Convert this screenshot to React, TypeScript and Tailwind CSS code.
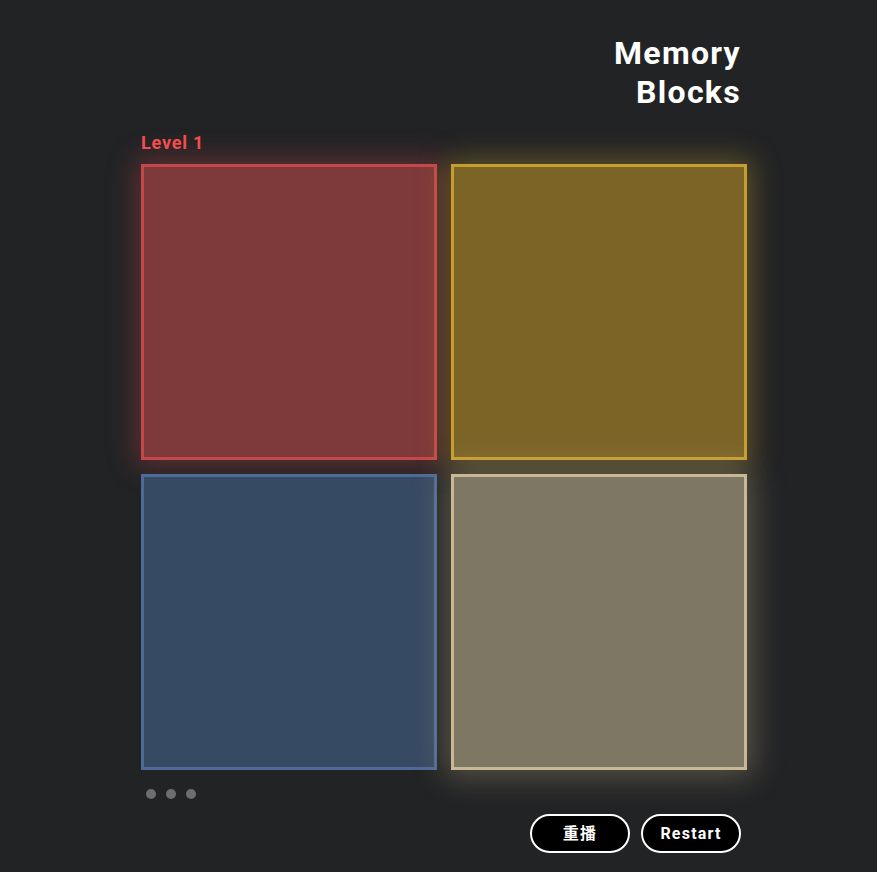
import React from "react";

const blocks = [
  { fill: "bg-[#7e393b]", border: "border-[#c4484a]", glow: "shadow-[0_0_26px_5px_rgba(200,70,72,0.38)]" },
  { fill: "bg-[#7c6427]", border: "border-[#c69e30]", glow: "shadow-[0_0_26px_5px_rgba(200,160,48,0.38)]" },
  { fill: "bg-[#374a63]", border: "border-[#4d6a98]", glow: "shadow-none" },
  { fill: "bg-[#7d7764]", border: "border-[#c8b894]", glow: "shadow-[0_0_30px_6px_rgba(210,195,150,0.32)]" },
];

export default function App() {
  return (
    <div className="min-h-[872px] w-full bg-[#222325] font-['Roboto','Noto_Sans',sans-serif]">
      <div className="ml-[141px] w-[600px] pt-[34px]">
        <div className="flex justify-end">
          <h1 className="text-right text-[32px] font-bold leading-[39px] tracking-[1.3px] text-white">
            Memory
            <br />
            Blocks
          </h1>
        </div>
        <div className="mt-[19px] text-[18px] font-bold leading-[24px] tracking-[0.8px] text-[#f54f4f]">Level 1</div>
        <div className="mt-[9px] grid w-[606px] grid-cols-[296px_296px] gap-[14px]">
          {blocks.map((b, i) => (
            <div key={i} className={`h-[296px] border-[3px] ${b.fill} ${b.border} ${b.glow}`} />
          ))}
        </div>
        <div className="mt-[19px] flex gap-[10px] pl-[5px]">
          <div className="h-[10px] w-[10px] rounded-full bg-[#6e6e70]" />
          <div className="h-[10px] w-[10px] rounded-full bg-[#6e6e70]" />
          <div className="h-[10px] w-[10px] rounded-full bg-[#6e6e70]" />
        </div>
        <div className="mt-[15px] flex justify-end gap-[11px] pr-[0px]">
          <button className="h-[39px] w-[100px] rounded-full border-2 border-white bg-black text-[16px] font-bold tracking-[1.2px] text-white font-['Roboto','Noto_Sans_CJK_SC',sans-serif]">
            重播
          </button>
          <button className="h-[39px] w-[100px] rounded-full border-2 border-white bg-black text-[16px] font-bold tracking-[1.2px] text-white">
            Restart
          </button>
        </div>
      </div>
    </div>
  );
}
